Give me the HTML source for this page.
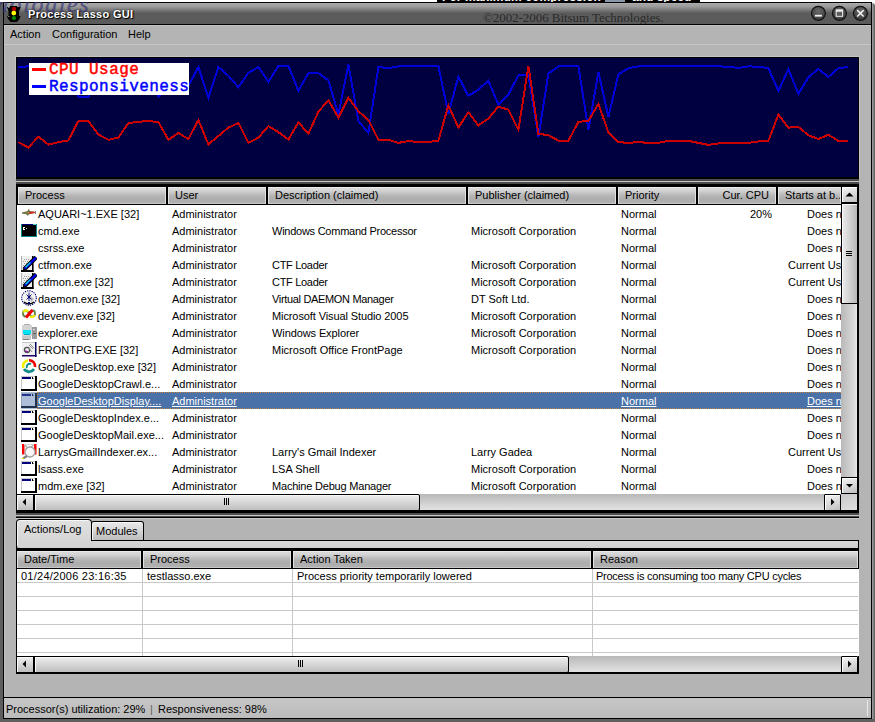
<!DOCTYPE html>
<html><head><meta charset="utf-8">
<style>
*{box-sizing:border-box;margin:0;padding:0}
html,body{width:875px;height:722px;overflow:hidden;background:#fff}
body{position:relative;font-family:"Liberation Sans",sans-serif;font-size:11px;color:#000}
.a{position:absolute}
.hdr{position:absolute;top:0;height:17px;background:linear-gradient(#d9d9d9 0,#d6d6d6 2px,#b4b4b4 8px,#adadad 11px,#b0b0b0 15px);border-top:1px solid #ebebeb;border-left:1px solid #e4e4e4;border-right:1px solid #e0e0e0;border-bottom:1px solid #c8c8c8;white-space:nowrap;overflow:hidden;line-height:15px;padding-left:6px;color:#000}
.row{position:absolute;left:17px;width:824px;height:17px;white-space:nowrap}
.row .c{position:absolute;top:1px;line-height:17px}
.row.sel{color:#fff}
.selbg{position:absolute;left:20px;top:0;width:804px;height:17px;background:#4a72a8}
.row.sel .c{text-decoration:underline}
.icw{position:absolute;left:4px;top:0;width:16px;height:17px}
.ic{display:block}
.focus{position:absolute;left:20px;top:0;width:900px;height:17px;border:1px dotted #c08040}
.sbtn{position:absolute;background:linear-gradient(90deg,#f0f0f0,#d8d8d8 50%,#b8b8b8);border-top:1px solid #f8f8f8;border-left:1px solid #f8f8f8}
</style></head><body>
<!-- desktop background strips -->
<div class="a" style="left:0;top:0;width:875px;height:2px;background:#fff"></div>
<div class="a" style="left:437px;top:0;width:263px;height:3px;background:#000;overflow:hidden">
 <div class="a" style="left:5px;top:-9px;font:bold 12px 'Liberation Sans',sans-serif;line-height:12px;color:#fff;white-space:pre;letter-spacing:0.1px">For maximum compression</div>
 <div class="a" style="left:168px;top:0;width:20px;height:2px;background:#8898a8"></div>
 <div class="a" style="left:195px;top:-9px;font:bold 12px 'Liberation Sans',sans-serif;line-height:12px;color:#fff;white-space:pre">and speed</div>
</div>
<div class="a" style="left:0;top:2px;width:3px;height:720px;background:#5e5e5e"></div>
<div class="a" style="left:872px;top:3px;width:3px;height:719px;background:linear-gradient(90deg,#a4a4a4,#7c7c7c 50%,#5c5c5c);border-top-right-radius:3px"></div>
<div class="a" style="left:0;top:719px;width:875px;height:3px;background:#606060"></div>

<!-- window -->
<div class="a" style="left:3px;top:2px;width:869px;height:717px;background:#000"></div>
<div class="a" style="left:4px;top:25px;width:867px;height:693px;background:#b4b4b4"></div>
<!-- title bar -->
<div class="a" style="left:4px;top:3px;width:867px;height:21px;background:linear-gradient(#b8b8b8 0px,#a2a2a2 1px,#a0a0a0 3px,#7a7a7a 7px,#5c5c5c 10px,#5a5a5a 21px)"></div>
<div class="a" style="left:4px;top:25px;width:867px;height:1px;background:#c2c2c2"></div>
<div class="a" style="left:4px;top:25px;width:1px;height:672px;background:#c0c0c0"></div>
<!-- watermark text behind glass -->
<div class="a" style="left:0;top:2px;width:140px;height:22px;overflow:hidden"><div class="a" style="left:-4px;top:-10px;font:italic 24px 'Liberation Serif',serif;line-height:24px;letter-spacing:1.6px;color:rgba(50,50,115,0.6);-webkit-text-stroke:0.6px rgba(50,50,115,0.5);white-space:nowrap">nologies</div></div>
<div class="a" style="left:483px;top:10px;width:200px;height:14px;overflow:hidden;font:13px 'Liberation Serif',serif;color:#2a2a2a;white-space:nowrap;line-height:16px;letter-spacing:-0.06px">©2002-2006 Bitsum Technologies.</div>
<!-- traffic light icon -->
<svg class="a" style="left:5px;top:4px" width="18" height="19" viewBox="0 0 18 19">
 <path d="M5 2 H12 V3 H15.5 L14.5 6 L14 7.5 V12 H15.5 L14.5 15 L13 16.5 V17 L11.5 18 H6 L4.5 17 V16.5 L3 15 L2 12 H3.5 V7.5 L3 6 L2 3 H5 Z" fill="#000"/>
 <circle cx="9" cy="4.9" r="2.2" fill="#b00000"/>
 <circle cx="8.8" cy="9.1" r="2.4" fill="#ffff00"/>
 <circle cx="9" cy="14" r="2.1" fill="#008c00"/>
 <rect x="3" y="3" width="1.5" height="1" fill="#d0d0d0" opacity="0.6"/>
 <rect x="3" y="12" width="1.5" height="1" fill="#d0d0d0" opacity="0.6"/>
</svg>
<div class="a" style="left:28px;top:7px;font:bold 11px 'Liberation Sans',sans-serif;color:#fff;white-space:nowrap;line-height:14px;letter-spacing:0.3px;text-shadow:1px 1px 1px #000,0 0 2px #000">Process Lasso GUI</div>
<!-- caption buttons -->
<svg class="a" style="left:808px;top:4px" width="64" height="20" viewBox="0 0 64 20">
 <defs><radialGradient id="bg" cx="50%" cy="35%" r="60%"><stop offset="0" stop-color="#6a6a6a"/><stop offset="1" stop-color="#3c3c3c"/></radialGradient></defs>
 <g transform="translate(10.4,9.3)"><circle r="7.6" fill="#8a8a8a"/><circle r="7" fill="url(#bg)" stroke="#111" stroke-width="1.3"/><rect x="-3.5" y="1.5" width="7" height="1.8" fill="#f0f0f0"/></g>
 <g transform="translate(31.4,9.3)"><circle r="7.6" fill="#8a8a8a"/><circle r="7" fill="url(#bg)" stroke="#111" stroke-width="1.3"/><rect x="-3.2" y="-3.4" width="6.4" height="6.4" fill="none" stroke="#f0f0f0" stroke-width="1"/><rect x="-3.2" y="-3.4" width="6.4" height="1.8" fill="#f0f0f0"/></g>
 <g transform="translate(52.4,9.3)"><circle r="7.6" fill="#8a8a8a"/><circle r="7" fill="url(#bg)" stroke="#111" stroke-width="1.3"/><path d="M-3.2 -3.2 L3.2 3.2 M3.2 -3.2 L-3.2 3.2" stroke="#f4f4f4" stroke-width="1.5"/></g>
</svg>

<!-- menu bar -->
<div class="a" style="left:10px;top:28px;line-height:13px;white-space:nowrap">Action</div>
<div class="a" style="left:52px;top:28px;line-height:13px;white-space:nowrap">Configuration</div>
<div class="a" style="left:128px;top:28px;line-height:13px;white-space:nowrap">Help</div>
<div class="a" style="left:4px;top:44px;width:867px;height:1px;background:#c6c6c6"></div>

<!-- graph -->
<div class="a" style="left:15px;top:56px;width:845px;height:122px;background:#c4c4c4"></div>
<div class="a" style="left:16px;top:57px;width:843px;height:121px;background:#000"></div>
<svg class="a" style="left:0;top:0" width="875" height="180" viewBox="0 0 875 180">
 <rect x="17" y="58" width="841" height="119" fill="#000040"/>
 <g clip-path="url(#gc)">
 <clipPath id="gc"><rect x="17" y="58" width="841" height="119"/></clipPath>
 <polyline points="18.4,67.3 28.4,66.3 38.4,70.0 48.4,70.0 58.4,70.0 68.4,70.0 78.4,97.0 88.4,97.0 98.4,75.0 108.4,75.0 118.4,75.0 128.4,75.0 138.4,75.0 148.4,75.0 158.4,96.5 168.4,85.0 178.4,80.0 188.4,86.0 198.4,67.0 208.4,97.9 218.4,67.0 228.4,75.8 238.4,87.2 248.4,72.8 258.4,67.0 268.4,81.9 278.4,65.9 288.4,65.9 298.4,90.8 308.4,73.0 318.4,73.0 328.4,80.4 338.4,114.7 348.4,64.4 358.4,121.0 368.4,133.0 378.4,67.0 388.4,68.0 398.4,66.5 408.4,66.0 418.4,66.0 428.4,66.0 438.4,66.0 448.4,114.0 458.4,76.6 468.4,96.0 478.4,89.5 488.4,80.7 498.4,104.8 508.4,94.9 518.4,75.0 528.4,75.0 538.4,137.0 548.4,73.5 558.4,66.4 568.4,66.4 578.4,66.4 588.4,130.0 598.4,72.0 608.4,117.0 618.4,74.3 628.4,68.2 638.4,66.4 648.4,66.0 658.4,66.0 668.4,66.0 678.4,66.0 688.4,66.0 698.4,66.0 708.4,66.0 718.4,66.4 728.4,66.7 738.4,67.9 748.4,66.4 758.4,66.7 768.4,68.2 778.4,91.0 788.4,69.2 798.4,93.8 808.4,77.2 818.4,69.0 828.4,77.0 838.4,68.2 848.4,67.0" fill="none" stroke="#0000d8" stroke-width="2" stroke-linejoin="miter" shape-rendering="crispEdges"/>
 <polyline points="18.4,142.1 28.4,147.6 38.4,136.7 48.4,144.6 58.4,142.1 68.4,140.4 78.4,121.0 88.4,121.2 98.4,134.5 108.4,139.8 118.4,137.6 128.4,123.0 138.4,121.9 148.4,120.8 158.4,122.3 168.4,139.8 178.4,133.0 188.4,139.0 198.4,120.0 208.4,144.4 218.4,136.0 228.4,127.6 238.4,123.0 248.4,142.9 258.4,137.6 268.4,126.1 278.4,132.2 288.4,139.5 298.4,122.3 308.4,133.7 318.4,111.6 328.4,100.2 338.4,117.7 348.4,97.9 358.4,111.3 368.4,120.0 378.4,139.8 388.4,139.8 398.4,142.9 408.4,141.0 418.4,142.0 428.4,142.0 438.4,140.6 448.4,105.5 458.4,127.6 468.4,112.1 478.4,125.4 488.4,118.5 498.4,106.6 508.4,109.7 518.4,130.0 528.4,65.9 538.4,133.7 548.4,135.3 558.4,140.6 568.4,140.6 578.4,121.9 588.4,120.8 598.4,104.0 608.4,132.2 618.4,142.1 628.4,142.9 638.4,142.1 648.4,142.9 658.4,142.9 668.4,140.9 678.4,140.9 688.4,140.9 698.4,142.9 708.4,144.9 718.4,143.5 728.4,142.9 738.4,142.9 748.4,142.9 758.4,141.4 768.4,140.6 778.4,114.7 788.4,127.6 798.4,126.9 808.4,135.3 818.4,139.0 828.4,134.8 838.4,140.9 848.4,140.9" fill="none" stroke="#cc0000" stroke-width="2" stroke-linejoin="miter" shape-rendering="crispEdges"/>
 </g>
 <rect x="29" y="63" width="160" height="32" fill="#fff"/>
 <rect x="32" y="68" width="14" height="3" fill="#ff0000"/>
 <rect x="32" y="85" width="14" height="3" fill="#0000ff"/>
</svg>
<div class="a" style="left:49px;top:62px;font:16px 'Liberation Mono',monospace;color:#ff0000;white-space:pre;line-height:17px;letter-spacing:0.42px;-webkit-text-stroke:0.45px #ff0000">CPU Usage</div>
<div class="a" style="left:49px;top:79px;font:16px 'Liberation Mono',monospace;color:#0000ff;white-space:pre;line-height:17px;letter-spacing:0.42px;-webkit-text-stroke:0.45px #0000ff">Responsiveness</div>

<!-- splitter -->
<div class="a" style="left:16px;top:177px;width:843px;height:2px;background:#000"></div>
<div class="a" style="left:16px;top:179px;width:843px;height:2px;background:#4a4a4a"></div>
<div class="a" style="left:16px;top:181px;width:843px;height:1px;background:#c8c8c8"></div>
<div class="a" style="left:16px;top:182px;width:843px;height:2px;background:#4a4a4a"></div>

<!-- main list view -->
<div class="a" style="left:16px;top:184px;width:843px;height:329px;background:#000"></div>
<div class="a" style="left:17px;top:205px;width:824px;height:289px;background:#fff;overflow:hidden">
 <div style="position:absolute;left:-17px;top:-205px;width:875px;height:722px">
<div class="row" style="top:205px"><div class="icw"><svg class="ic" width="16" height="17" viewBox="0 0 16 17"><path d="M1 8 Q8 5 14 7.5 Q8 10 1 8 Z" fill="#9a9a50" stroke="#606030" stroke-width="0.8"/><path d="M6 7 L8 3.5 L9 7 Z" fill="#707040"/><path d="M5 9 L7 11 L8 8.5 Z" fill="#707040"/><path d="M8 8 L13.5 7.3" stroke="#e02020" stroke-width="1.6"/><rect x="14" y="6" width="1" height="3" fill="#808080"/></svg></div><span class="c" style="left:21px">AQUARI~1.EXE [32]</span><span class="c" style="left:155px">Administrator</span><span class="c" style="left:604px">Normal</span><span class="c r" style="right:69px">20%</span><span class="c" style="left:790px">Does n</span></div>
<div class="row" style="top:222px"><div class="icw"><svg class="ic" width="16" height="17" viewBox="0 0 16 17"><rect x="0.5" y="2.5" width="15" height="12" fill="#000" stroke="#108c8c"/><rect x="1" y="2" width="14" height="1" fill="#000080"/><rect x="12" y="2" width="3" height="1" fill="#50d0d0"/><rect x="2" y="5" width="2" height="1" fill="#fff"/><rect x="2" y="5" width="1" height="3" fill="#fff"/><rect x="2" y="7" width="2" height="1" fill="#fff"/><rect x="5" y="6" width="1" height="1" fill="#ddd"/></svg></div><span class="c" style="left:21px">cmd.exe</span><span class="c" style="left:155px">Administrator</span><span class="c" style="left:255px;letter-spacing:-0.25px">Windows Command Processor</span><span class="c" style="left:454px">Microsoft Corporation</span><span class="c" style="left:604px">Normal</span><span class="c" style="left:790px">Does n</span></div>
<div class="row" style="top:239px"><div class="icw"></div><span class="c" style="left:21px">csrss.exe</span><span class="c" style="left:155px">Administrator</span><span class="c" style="left:604px">Normal</span><span class="c" style="left:790px">Does n</span></div>
<div class="row" style="top:256px"><div class="icw"><svg class="ic" width="16" height="17" viewBox="0 0 16 17"><rect x="0" y="0" width="12" height="16" fill="#efefef"/><rect x="0" y="0" width="1" height="15" fill="#b0b0b0"/><rect x="11" y="0" width="1.6" height="16" fill="#000"/><rect x="0" y="14" width="12.5" height="2" fill="#000"/><path d="M3 3h1v1h-1zM5 3h1v1h-1zM7 3h1v1h-1zM2 5h1v1h-1zM4 5h1v1h-1zM6 5h1v1h-1zM3 7h1v1h-1zM5 7h1v1h-1zM2 9h1v1h-1zM4 9h1v1h-1z" fill="#a0a0a0"/><path d="M3 13.5 L15.2 1.3" stroke="#000" stroke-width="4.2"/><path d="M3.6 12.8 L15 1.6" stroke="#0000e8" stroke-width="2.3"/><path d="M4.6 11.2 L9.5 6.4" stroke="#00e8f0" stroke-width="1.2"/><rect x="2" y="13" width="2" height="2" fill="#000"/></svg></div><span class="c" style="left:21px">ctfmon.exe</span><span class="c" style="left:155px">Administrator</span><span class="c" style="left:255px;letter-spacing:-0.3px">CTF Loader</span><span class="c" style="left:454px">Microsoft Corporation</span><span class="c" style="left:604px">Normal</span><span class="c" style="left:771px">Current Us</span></div>
<div class="row" style="top:273px"><div class="icw"><svg class="ic" width="16" height="17" viewBox="0 0 16 17"><rect x="0" y="0" width="12" height="16" fill="#efefef"/><rect x="0" y="0" width="1" height="15" fill="#b0b0b0"/><rect x="11" y="0" width="1.6" height="16" fill="#000"/><rect x="0" y="14" width="12.5" height="2" fill="#000"/><path d="M3 3h1v1h-1zM5 3h1v1h-1zM7 3h1v1h-1zM2 5h1v1h-1zM4 5h1v1h-1zM6 5h1v1h-1zM3 7h1v1h-1zM5 7h1v1h-1zM2 9h1v1h-1zM4 9h1v1h-1z" fill="#a0a0a0"/><path d="M3 13.5 L15.2 1.3" stroke="#000" stroke-width="4.2"/><path d="M3.6 12.8 L15 1.6" stroke="#0000e8" stroke-width="2.3"/><path d="M4.6 11.2 L9.5 6.4" stroke="#00e8f0" stroke-width="1.2"/><rect x="2" y="13" width="2" height="2" fill="#000"/></svg></div><span class="c" style="left:21px">ctfmon.exe [32]</span><span class="c" style="left:155px">Administrator</span><span class="c" style="left:255px;letter-spacing:-0.3px">CTF Loader</span><span class="c" style="left:454px">Microsoft Corporation</span><span class="c" style="left:604px">Normal</span><span class="c" style="left:771px">Current Us</span></div>
<div class="row" style="top:290px"><div class="icw"><svg class="ic" width="16" height="17" viewBox="0 0 16 17"><circle cx="8" cy="8" r="7.3" fill="#f4f4f4" stroke="#000080" stroke-width="1.1" stroke-dasharray="1.3 1"/><path d="M3 12 A7.3 7.3 0 0 0 13 12" stroke="#000" stroke-width="1.3" fill="none"/><path d="M9 5 L13 9 L10 13 Z" fill="#c4c4c4"/><path d="M8 2.5 L8 11 M5.5 4.5 L10.5 9.5 M10.5 4.5 L5.5 9.5" stroke="#000070" stroke-width="0.9"/><circle cx="8" cy="7" r="1.3" fill="#000070"/><rect x="7" y="12" width="2" height="2" fill="#000070"/></svg></div><span class="c" style="left:21px">daemon.exe [32]</span><span class="c" style="left:155px">Administrator</span><span class="c" style="left:255px;letter-spacing:-0.33px">Virtual DAEMON Manager</span><span class="c" style="left:454px">DT Soft Ltd.</span><span class="c" style="left:604px">Normal</span><span class="c" style="left:790px">Does n</span></div>
<div class="row" style="top:307px"><div class="icw"><svg class="ic" width="16" height="17" viewBox="0 0 16 17"><path d="M2 6 C2 3 5 2.5 7 5 L9 8 C11 10.5 14 10 14 6.5 C14 3 11 2.5 9 5 L7 8 C5 10.5 2 10 2 6 Z" fill="#fff" stroke="#6a8a50" stroke-width="2"/><path d="M2.8 5.5 C3 3.2 5.5 2.5 7.2 4.6" stroke="#f4f000" stroke-width="2.4" fill="none"/><path d="M9 9.5 C11 10.5 13 10 13.6 8" stroke="#f4f000" stroke-width="2.2" fill="none"/><path d="M5 10.5 L11.5 3" stroke="#f00000" stroke-width="3"/></svg></div><span class="c" style="left:21px">devenv.exe [32]</span><span class="c" style="left:155px">Administrator</span><span class="c" style="left:255px;letter-spacing:-0.1px">Microsoft Visual Studio 2005</span><span class="c" style="left:454px">Microsoft Corporation</span><span class="c" style="left:604px">Normal</span><span class="c" style="left:790px">Does n</span></div>
<div class="row" style="top:324px"><div class="icw"><svg class="ic" width="16" height="17" viewBox="0 0 16 17"><rect x="11" y="3" width="5" height="12" fill="#9c9c9c"/><rect x="12" y="5" width="2" height="1" fill="#e0e0e0"/><rect x="12" y="9" width="3" height="1" fill="#606060"/><rect x="1" y="1" width="10" height="11" fill="#d4d4d4"/><rect x="3" y="0" width="6" height="1" fill="#b0b0b0"/><rect x="2" y="6" width="8" height="4" fill="#00e4f4"/><rect x="3" y="10" width="6" height="1" fill="#00a8c0"/><rect x="1" y="12" width="9" height="4" fill="#c8c8c8"/><rect x="2" y="15" width="6" height="1" fill="#808080"/></svg></div><span class="c" style="left:21px">explorer.exe</span><span class="c" style="left:155px">Administrator</span><span class="c" style="left:255px;letter-spacing:-0.1px">Windows Explorer</span><span class="c" style="left:454px">Microsoft Corporation</span><span class="c" style="left:604px">Normal</span><span class="c" style="left:790px">Does n</span></div>
<div class="row" style="top:341px"><div class="icw"><svg class="ic" width="16" height="17" viewBox="0 0 16 17"><rect x="1" y="1" width="14" height="14" fill="#f0f0f0"/><rect x="1" y="1" width="14" height="1" fill="#c8c8c8"/><rect x="14" y="1" width="1.5" height="15" fill="#000060"/><rect x="1" y="14" width="14.5" height="1.5" fill="#200060"/><circle cx="6" cy="9" r="2.6" fill="none" stroke="#505050" stroke-width="1.3"/><path d="M4 10 L7 11" stroke="#9020a0" stroke-width="1.4"/><path d="M8 4 L12 8 M9 3 L13 7 M8 7 L11 11" stroke="#909090" stroke-width="1"/></svg></div><span class="c" style="left:21px">FRONTPG.EXE [32]</span><span class="c" style="left:155px">Administrator</span><span class="c" style="left:255px;letter-spacing:0px">Microsoft Office FrontPage</span><span class="c" style="left:454px">Microsoft Corporation</span><span class="c" style="left:604px">Normal</span><span class="c" style="left:790px">Does n</span></div>
<div class="row" style="top:358px"><div class="icw"><svg class="ic" width="16" height="17" viewBox="0 0 16 17"><path d="M3 11 A6 6 0 0 0 13 11" stroke="#108c8c" stroke-width="2.6" fill="none"/><path d="M2.3 10 A6 6 0 0 1 7 2.2" stroke="#f0f000" stroke-width="2.6" fill="none"/><path d="M8 2.2 A6 6 0 0 1 14 9" stroke="#f00000" stroke-width="2.6" fill="none"/><path d="M6 10 A3 3 0 0 1 10 6" stroke="#108c8c" stroke-width="2" fill="none"/><path d="M5.5 12 L8.5 15" stroke="#108c8c" stroke-width="1.8"/></svg></div><span class="c" style="left:21px">GoogleDesktop.exe [32]</span><span class="c" style="left:155px">Administrator</span><span class="c" style="left:604px">Normal</span><span class="c" style="left:790px">Does n</span></div>
<div class="row" style="top:375px"><div class="icw"><svg class="ic" width="16" height="17" viewBox="0 0 16 17"><rect x="0" y="1" width="16" height="15" fill="#fff"/><rect x="0" y="1" width="14" height="1" fill="#c8c8c8"/><rect x="0" y="1" width="1" height="14" fill="#c8c8c8"/><rect x="1" y="2" width="9" height="2" fill="#00007b"/><rect x="11" y="2" width="1" height="2" fill="#000"/><rect x="12" y="3" width="1" height="1" fill="#808080"/><rect x="14" y="1" width="2" height="15" fill="#000"/><rect x="0" y="14" width="16" height="2" fill="#000"/></svg></div><span class="c" style="left:21px">GoogleDesktopCrawl.e...</span><span class="c" style="left:155px">Administrator</span><span class="c" style="left:604px">Normal</span><span class="c" style="left:790px">Does n</span></div>
<div class="row sel" style="top:392px"><div class="icw"><svg class="ic" width="16" height="17" viewBox="0 0 16 17"><rect x="0" y="1" width="16" height="15" fill="#fff"/><rect x="0" y="1" width="14" height="1" fill="#c8c8c8"/><rect x="0" y="1" width="1" height="14" fill="#c8c8c8"/><rect x="1" y="2" width="9" height="2" fill="#00007b"/><rect x="11" y="2" width="1" height="2" fill="#000"/><rect x="12" y="3" width="1" height="1" fill="#808080"/><rect x="14" y="1" width="2" height="15" fill="#000"/><rect x="0" y="14" width="16" height="2" fill="#000"/><rect x="0" y="0" width="16" height="17" fill="#4a72a8" opacity="0.45"/></svg></div><div class="selbg"></div><div class="focus"></div><span class="c" style="left:21px">GoogleDesktopDisplay....</span><span class="c" style="left:155px">Administrator</span><span class="c" style="left:604px">Normal</span><span class="c" style="left:790px">Does n</span></div>
<div class="row" style="top:409px"><div class="icw"><svg class="ic" width="16" height="17" viewBox="0 0 16 17"><rect x="0" y="1" width="16" height="15" fill="#fff"/><rect x="0" y="1" width="14" height="1" fill="#c8c8c8"/><rect x="0" y="1" width="1" height="14" fill="#c8c8c8"/><rect x="1" y="2" width="9" height="2" fill="#00007b"/><rect x="11" y="2" width="1" height="2" fill="#000"/><rect x="12" y="3" width="1" height="1" fill="#808080"/><rect x="14" y="1" width="2" height="15" fill="#000"/><rect x="0" y="14" width="16" height="2" fill="#000"/></svg></div><span class="c" style="left:21px">GoogleDesktopIndex.e...</span><span class="c" style="left:155px">Administrator</span><span class="c" style="left:604px">Normal</span><span class="c" style="left:790px">Does n</span></div>
<div class="row" style="top:426px"><div class="icw"><svg class="ic" width="16" height="17" viewBox="0 0 16 17"><rect x="0" y="1" width="16" height="15" fill="#fff"/><rect x="0" y="1" width="14" height="1" fill="#c8c8c8"/><rect x="0" y="1" width="1" height="14" fill="#c8c8c8"/><rect x="1" y="2" width="9" height="2" fill="#00007b"/><rect x="11" y="2" width="1" height="2" fill="#000"/><rect x="12" y="3" width="1" height="1" fill="#808080"/><rect x="14" y="1" width="2" height="15" fill="#000"/><rect x="0" y="14" width="16" height="2" fill="#000"/></svg></div><span class="c" style="left:21px">GoogleDesktopMail.exe...</span><span class="c" style="left:155px">Administrator</span><span class="c" style="left:604px">Normal</span><span class="c" style="left:790px">Does n</span></div>
<div class="row" style="top:443px"><div class="icw"><svg class="ic" width="16" height="17" viewBox="0 0 16 17"><rect x="1" y="1" width="2.5" height="10.5" fill="#ff0000"/><rect x="13" y="1" width="2.5" height="10.5" fill="#ff0000"/><path d="M3 1.5 L8 6 L13 1.5" stroke="#a8a8a8" stroke-width="1.2" fill="none"/><rect x="3" y="1" width="10" height="1" fill="#d8d8d8"/><circle cx="9" cy="9" r="5" fill="#f8f8f8" stroke="#a0a0a0" stroke-width="1.3"/><path d="M2 15.5 L6 13" stroke="#808080" stroke-width="2.2"/><rect x="1" y="15" width="2" height="1" fill="#e0e000"/></svg></div><span class="c" style="left:21px">LarrysGmailIndexer.ex...</span><span class="c" style="left:155px">Administrator</span><span class="c" style="left:255px;letter-spacing:0px">Larry's Gmail Indexer</span><span class="c" style="left:454px">Larry Gadea</span><span class="c" style="left:604px">Normal</span><span class="c" style="left:771px">Current Us</span></div>
<div class="row" style="top:460px"><div class="icw"><svg class="ic" width="16" height="17" viewBox="0 0 16 17"><rect x="0" y="1" width="16" height="15" fill="#fff"/><rect x="0" y="1" width="14" height="1" fill="#c8c8c8"/><rect x="0" y="1" width="1" height="14" fill="#c8c8c8"/><rect x="1" y="2" width="9" height="2" fill="#00007b"/><rect x="11" y="2" width="1" height="2" fill="#000"/><rect x="12" y="3" width="1" height="1" fill="#808080"/><rect x="14" y="1" width="2" height="15" fill="#000"/><rect x="0" y="14" width="16" height="2" fill="#000"/></svg></div><span class="c" style="left:21px">lsass.exe</span><span class="c" style="left:155px">Administrator</span><span class="c" style="left:255px;letter-spacing:0px">LSA Shell</span><span class="c" style="left:454px">Microsoft Corporation</span><span class="c" style="left:604px">Normal</span><span class="c" style="left:790px">Does n</span></div>
<div class="row" style="top:477px"><div class="icw"><svg class="ic" width="16" height="17" viewBox="0 0 16 17"><rect x="0" y="1" width="16" height="15" fill="#fff"/><rect x="0" y="1" width="14" height="1" fill="#c8c8c8"/><rect x="0" y="1" width="1" height="14" fill="#c8c8c8"/><rect x="1" y="2" width="9" height="2" fill="#00007b"/><rect x="11" y="2" width="1" height="2" fill="#000"/><rect x="12" y="3" width="1" height="1" fill="#808080"/><rect x="14" y="1" width="2" height="15" fill="#000"/><rect x="0" y="14" width="16" height="2" fill="#000"/></svg></div><span class="c" style="left:21px">mdm.exe [32]</span><span class="c" style="left:155px">Administrator</span><span class="c" style="left:255px;letter-spacing:-0.2px">Machine Debug Manager</span><span class="c" style="left:454px">Microsoft Corporation</span><span class="c" style="left:604px">Normal</span><span class="c" style="left:790px">Does n</span></div>
 </div>
</div>
<div class="a" style="left:0;top:187px;width:842px;height:17px">
 <div class="hdr" style="left:18px;width:148px">Process</div>
 <div class="hdr" style="left:168px;width:98px">User</div>
 <div class="hdr" style="left:268px;width:198px">Description (claimed)</div>
 <div class="hdr" style="left:468px;width:148px">Publisher (claimed)</div>
 <div class="hdr" style="left:618px;width:78px">Priority</div>
 <div class="hdr" style="left:698px;width:78px;text-align:right;padding-right:6px">Cur. CPU</div>
 <div class="hdr" style="left:778px;width:63px">Starts at b..</div>
</div>
<!-- vertical scrollbar -->
<div class="a" style="left:842px;top:187px;width:15px;height:15px;background:linear-gradient(160deg,#f6f6f6,#d8d8d8 55%,#c0c0c0);box-shadow:inset 1px 1px 0 #fff"></div>
<svg class="a" style="left:842px;top:187px" width="15" height="15"><path d="M3.5 9.5 L7.5 5.5 L11.5 9.5 Z" fill="#000"/></svg>
<div class="a" style="left:841px;top:304px;width:16px;height:173px;background:linear-gradient(90deg,#b8b8b8,#dadada 85%,#e8e8e8)"></div>
<div class="a" style="left:842px;top:204px;width:15px;height:99px;background:linear-gradient(90deg,#ececec,#d2d2d2 50%,#b8b8b8);box-shadow:inset 1px 1px 0 #fafafa"></div>
<div class="a" style="left:842px;top:303px;width:15px;height:1px;background:#000"></div>
<div class="a" style="left:846px;top:251px;width:6px;height:1px;background:#000"></div>
<div class="a" style="left:846px;top:253px;width:6px;height:1px;background:#000"></div>
<div class="a" style="left:846px;top:255px;width:6px;height:1px;background:#000"></div>
<div class="a" style="left:841px;top:477px;width:17px;height:17px;border:1px solid #000;border-radius:1px;background:linear-gradient(160deg,#f6f6f6,#d8d8d8 55%,#c0c0c0);box-shadow:inset 1px 1px 0 #fff"></div>
<svg class="a" style="left:842px;top:478px" width="15" height="15"><path d="M4 6 L11 6 L7.5 9.5 Z" fill="#000"/></svg>
<!-- horizontal scrollbar -->
<div class="a" style="left:17px;top:494px;width:824px;height:16px;background:linear-gradient(#b8b8b8,#e2e2e2)"></div>
<div class="a" style="left:16px;top:494px;width:404px;height:17px;border:1px solid #000;border-radius:0 2px 2px 0;background:linear-gradient(#eeeeee,#d6d6d6 50%,#bebebe);box-shadow:inset 1px 1px 0 #fafafa"></div>
<div class="a" style="left:33px;top:494px;width:2px;height:17px;background:#000"></div>
<div class="a" style="left:35px;top:495px;width:1px;height:15px;background:#fafafa"></div>
<svg class="a" style="left:17px;top:494px" width="16" height="16"><path d="M5.5 8 L9 4.5 L9 11.5 Z" fill="#000"/></svg>
<div class="a" style="left:224px;top:498px;width:1px;height:7px;background:#000"></div>
<div class="a" style="left:226px;top:498px;width:1px;height:7px;background:#000"></div>
<div class="a" style="left:228px;top:498px;width:1px;height:7px;background:#000"></div>
<div class="a" style="left:824px;top:494px;width:17px;height:17px;border:1px solid #000;border-radius:1px;background:linear-gradient(160deg,#f6f6f6,#d8d8d8 55%,#c0c0c0);box-shadow:inset 1px 1px 0 #fff"></div>
<svg class="a" style="left:824px;top:494px" width="17" height="16"><path d="M7 4.5 L10.5 8 L7 11.5 Z" fill="#000"/></svg>
<div class="a" style="left:841px;top:494px;width:16px;height:16px;background:linear-gradient(160deg,#c8c8c8,#e0e0e0)"></div>
<!-- bottom splitter -->
<div class="a" style="left:16px;top:513px;width:843px;height:2px;background:#4e4e4e"></div>
<div class="a" style="left:16px;top:515px;width:843px;height:1px;background:#c8c8c8"></div>
<div class="a" style="left:16px;top:516px;width:843px;height:1px;background:#4e4e4e"></div>
<div class="a" style="left:16px;top:517px;width:843px;height:1px;background:#000"></div>
<div class="a" style="left:16px;top:518px;width:843px;height:1px;background:#c8c8c8"></div>

<!-- tabs -->
<div class="a" style="left:16px;top:540px;width:843px;height:11px;background:#000;border-radius:0 0 3px 0"></div>
<div class="a" style="left:17px;top:541px;width:841px;height:7px;background:linear-gradient(#d8d8d8,#cfcfcf)"></div>
<div class="a" style="left:16px;top:519px;width:76px;height:29px;background:#000;border-radius:4px 4px 0 4px"></div>
<div class="a" style="left:17px;top:520px;width:74px;height:28px;background:linear-gradient(#e0e0e0,#d2d2d2);border-radius:3px 3px 0 3px;border-top:1px solid #f6f6f6;border-left:1px solid #f6f6f6"></div>
<div class="a" style="left:91px;top:541px;width:2px;height:7px;background:#d0d0d0"></div>
<div class="a" style="left:24px;top:523px;line-height:13px;white-space:nowrap">Actions/Log</div>
<div class="a" style="left:91px;top:521px;width:53px;height:20px;background:#000;border-radius:3px 3px 0 0"></div>
<div class="a" style="left:92px;top:522px;width:51px;height:18px;background:linear-gradient(#e8e8e8,#d4d4d4 50%,#bcbcbc);border-radius:2px 2px 0 0;border-top:1px solid #f8f8f8;border-left:1px solid #f8f8f8"></div>
<div class="a" style="left:96px;top:525px;line-height:13px;white-space:nowrap">Modules</div>

<!-- log list view -->
<div class="a" style="left:16px;top:548px;width:843px;height:126px;background:#000"></div>
<div class="a" style="left:17px;top:569px;width:842px;height:87px;background:#fff;overflow:hidden">
 <div class="a" style="left:0;top:13px;width:841px;height:1px;background:#c8c8c8"></div>
 <div class="a" style="left:0;top:27px;width:841px;height:1px;background:#c8c8c8"></div>
 <div class="a" style="left:0;top:41px;width:841px;height:1px;background:#c8c8c8"></div>
 <div class="a" style="left:0;top:55px;width:841px;height:1px;background:#c8c8c8"></div>
 <div class="a" style="left:0;top:69px;width:841px;height:1px;background:#c8c8c8"></div>
 <div class="a" style="left:0;top:83px;width:841px;height:1px;background:#c8c8c8"></div>
 <div class="a" style="left:125px;top:0;width:1px;height:87px;background:#c8c8c8"></div>
 <div class="a" style="left:275px;top:0;width:1px;height:87px;background:#c8c8c8"></div>
 <div class="a" style="left:575px;top:0;width:1px;height:87px;background:#c8c8c8"></div>
 <div class="a" style="left:4px;top:1px;line-height:13px;white-space:nowrap;letter-spacing:0.25px">01/24/2006 23:16:35</div>
 <div class="a" style="left:130px;top:1px;line-height:13px;white-space:nowrap">testlasso.exe</div>
 <div class="a" style="left:280px;top:1px;line-height:13px;white-space:nowrap">Process priority temporarily lowered</div>
 <div class="a" style="left:579px;top:1px;line-height:13px;white-space:nowrap;letter-spacing:-0.25px">Process is consuming too many CPU cycles</div>
</div>
<div class="a" style="left:0;top:551px;width:858px;height:17px">
 <div class="hdr" style="left:17px;width:124px">Date/Time</div>
 <div class="hdr" style="left:143px;width:148px">Process</div>
 <div class="hdr" style="left:293px;width:298px">Action Taken</div>
 <div class="hdr" style="left:593px;width:265px">Reason</div>
</div>
<!-- log h scrollbar -->
<div class="a" style="left:17px;top:656px;width:841px;height:16px;background:linear-gradient(#b8b8b8,#e2e2e2)"></div>
<div class="a" style="left:16px;top:656px;width:553px;height:17px;border:1px solid #000;border-radius:0 2px 2px 0;background:linear-gradient(#eeeeee,#d6d6d6 50%,#bebebe);box-shadow:inset 1px 1px 0 #fafafa"></div>
<div class="a" style="left:33px;top:656px;width:2px;height:17px;background:#000"></div>
<div class="a" style="left:35px;top:657px;width:1px;height:15px;background:#fafafa"></div>
<svg class="a" style="left:17px;top:656px" width="16" height="16"><path d="M5.5 8 L9 4.5 L9 11.5 Z" fill="#000"/></svg>
<div class="a" style="left:298px;top:660px;width:1px;height:7px;background:#000"></div>
<div class="a" style="left:300px;top:660px;width:1px;height:7px;background:#000"></div>
<div class="a" style="left:302px;top:660px;width:1px;height:7px;background:#000"></div>
<div class="a" style="left:841px;top:656px;width:17px;height:17px;border:1px solid #000;border-radius:1px;background:linear-gradient(160deg,#f6f6f6,#d8d8d8 55%,#c0c0c0);box-shadow:inset 1px 1px 0 #fff"></div>
<svg class="a" style="left:841px;top:656px" width="17" height="17"><path d="M7 4.5 L10.5 8 L7 11.5 Z" fill="#000"/></svg>
<div class="a" style="left:16px;top:672px;width:842px;height:2px;background:#000"></div>

<!-- status bar -->
<div class="a" style="left:4px;top:697px;width:867px;height:1px;background:#000"></div>
<div class="a" style="left:4px;top:698px;width:867px;height:20px;background:linear-gradient(#c6c6c6,#bcbcbc)"></div>
<div class="a" style="left:6px;top:703px;line-height:13px;white-space:pre">Processor(s) utilization: 29%</div>
<div class="a" style="left:150px;top:703px;line-height:13px;white-space:pre;color:#606060">|</div>
<div class="a" style="left:158px;top:703px;line-height:13px;white-space:pre">Responsiveness: 98%</div>
<div class="a" style="left:867px;top:700px;width:1px;height:16px;background:#e8e8e8"></div>
</body></html>
